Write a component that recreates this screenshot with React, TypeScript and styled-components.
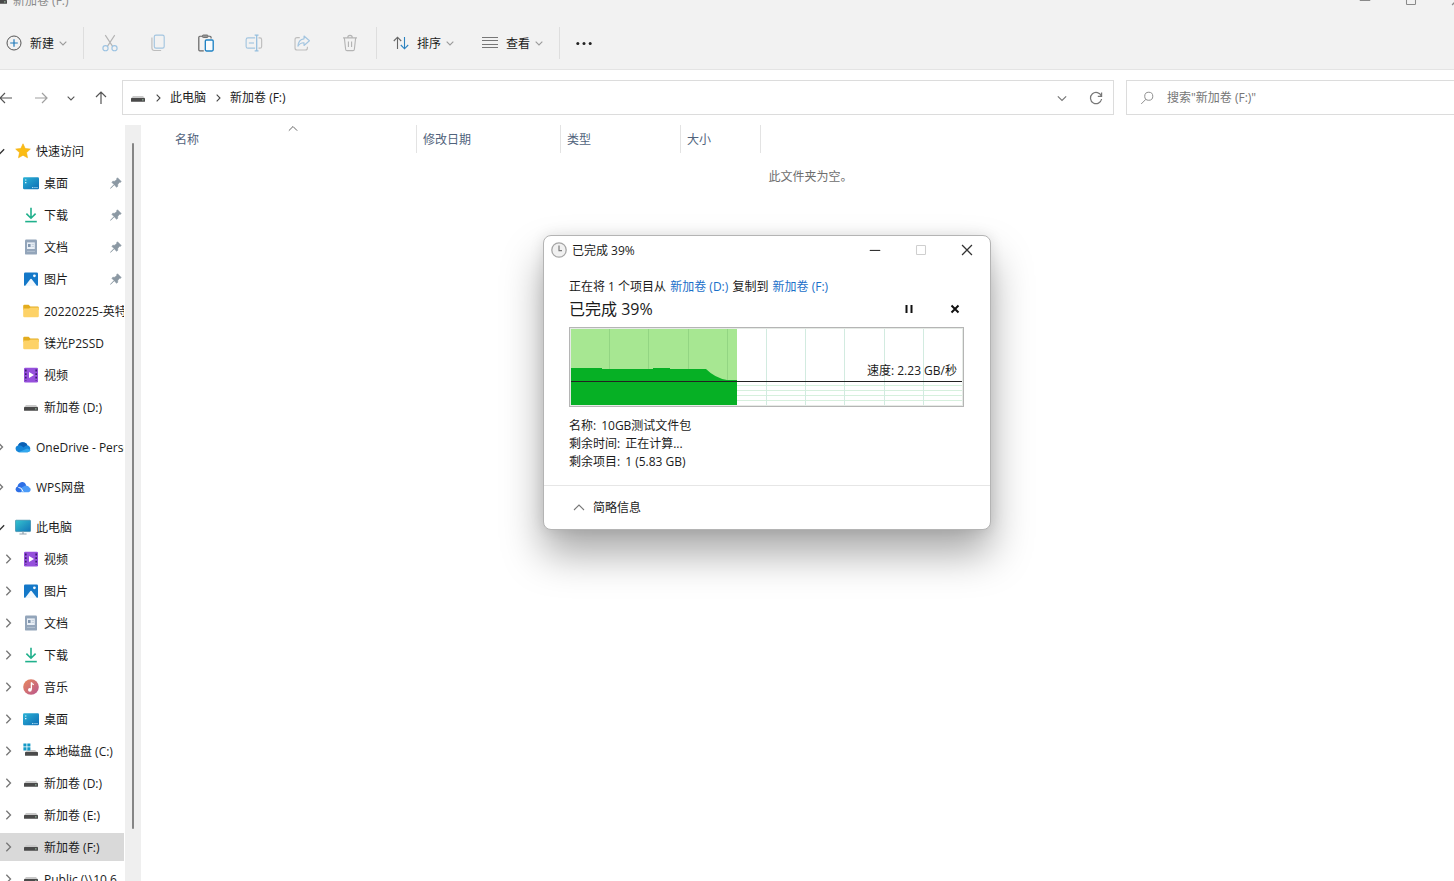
import React from "react";
import styled, { createGlobalStyle } from "styled-components";

const FONT = `"Open Sans", "Noto Sans CJK SC", sans-serif`;

const GlobalStyle = createGlobalStyle`
  *, *::before, *::after { box-sizing: border-box; }
  body {
    margin: 0;
    overflow: hidden;
    background: #fff;
    color: #1b1b1b;
    font: 12px/18px ${FONT};
  }
  button, input { font: inherit; color: inherit; }
  button { padding: 0; border: 0; background: none; cursor: pointer; }
  a { color: inherit; text-decoration: none; }
  svg { display: block; flex: none; }
`;

/* ---------- window shell ---------- */

const Viewport = styled.div`
  position: relative;
  display: flex;
  height: 100vh;
  overflow: hidden;
`;

const ExplorerWindow = styled.div`
  flex: 1;
  min-width: 0;
  display: flex;
  flex-direction: column;
  margin: -16px -26px 0 -8px;
`;

const TitleBar = styled.header`
  flex: none;
  display: flex;
  align-items: center;
  height: 32px;
  background: #f2f2f2;
  color: #8a8a8a;
`;

const WindowTitle = styled.span`
  flex: 1;
  margin-left: 5px;
  padding-top: 2px;
`;

const CaptionButton = styled.button<{ $height: number; $color?: string }>`
  display: flex;
  align-items: center;
  justify-content: center;
  width: 46px;
  height: ${(p) => p.$height}px;
  color: ${(p) => p.$color ?? "#333"};
`;

/* ---------- command bar ---------- */

const CommandBar = styled.div`
  flex: none;
  display: flex;
  align-items: center;
  height: 54px;
  padding-top: 1px;
  background: #f2f2f2;
  border-bottom: 1px solid #e4e4e4;
`;

const CommandButton = styled.button`
  display: flex;
  align-items: center;
  gap: 5px;
  height: 32px;
  padding: 0 14px;
`;

const CommandLabel = styled.span`
  margin-left: 3px;
  padding-top: 1px;
`;

const IconButton = styled.button`
  display: flex;
  align-items: center;
  justify-content: center;
  width: 48px;
  height: 32px;
`;

const Divider = styled.div`
  width: 1px;
  height: 32px;
  margin: 0 2px;
  background: #dedede;
`;

/* ---------- navigation row ---------- */

const NavigationRow = styled.div`
  flex: none;
  display: flex;
  align-items: center;
  gap: 7px;
  height: 55px;
  padding-right: 16px;
`;

const NavButton = styled.button<{ $narrow?: boolean }>`
  display: flex;
  align-items: center;
  justify-content: center;
  width: ${(p) => (p.$narrow ? 18 : 28)}px;
  height: 28px;
`;

const AddressBox = styled.nav`
  flex: 1;
  display: flex;
  align-items: center;
  height: 35px;
  margin-right: 5px;
  padding: 0 3px 0 7px;
  border: 1px solid #dcdcdc;
`;

const CrumbSeparator = styled.span`
  display: flex;
  justify-content: center;
  width: 24px;
`;

const AddressTools = styled.div`
  display: flex;
  gap: 6px;
  margin-left: auto;
`;

const SearchBox = styled.label`
  display: flex;
  align-items: center;
  gap: 13px;
  width: 338px;
  height: 35px;
  padding-left: 13px;
  border: 1px solid #dcdcdc;
`;

const SearchInput = styled.input`
  flex: 1;
  min-width: 0;
  height: 28px;
  padding: 0;
  border: 0;
  outline: 0;
  background: none;
  &::placeholder { color: #767676; opacity: 1; }
`;

/* ---------- body ---------- */

const Body = styled.div`
  flex: 1;
  min-height: 0;
  display: flex;
`;

const Sidebar = styled.nav`
  width: 132px;
  overflow: hidden;
  padding-top: 10px;
`;

const TreeGroup = styled.ul`
  margin: 0 0 12px;
  padding: 0;
  list-style: none;
`;

const TreeRow = styled.li<{ $level: number; $selected?: boolean }>`
  display: flex;
  align-items: center;
  height: 28px;
  margin: 2px 0;
  padding-left: ${(p) => p.$level * 8}px;
  background: ${(p) => (p.$selected ? "#d9d9d9" : "transparent")};
  & + & { margin-top: 4px; }
`;

const Expander = styled.button`
  flex: none;
  display: flex;
  align-items: center;
  justify-content: center;
  width: 16px;
  height: 28px;
`;

const ExpanderSpace = styled.span`
  flex: none;
  width: 16px;
`;

const TreeLink = styled.a`
  flex: 1;
  min-width: 0;
  display: flex;
  align-items: center;
  gap: 5px;
  margin-left: 7px;
`;

const TreeLabel = styled.span`
  flex: 1;
  min-width: 0;
  padding-top: 2px;
  overflow: hidden;
  white-space: nowrap;
`;

const PinSlot = styled.span`
  flex: none;
  margin-right: 2px;
`;

const ScrollTrack = styled.div`
  flex: none;
  display: flex;
  justify-content: center;
  width: 16px;
  margin-left: 1px;
  padding: 18px 0 52px;
  background: #efefef;
`;

const ScrollThumb = styled.div`
  width: 2px;
  border-radius: 1px;
  background: #858585;
`;

const FilePane = styled.main`
  flex: 1;
  min-width: 0;
`;

const FileTable = styled.table`
  margin-left: 28px;
  border-collapse: separate;
  border-spacing: 0;
  table-layout: fixed;
  width: 592px;
`;

const HeaderCell = styled.th<{ $width: number }>`
  position: relative;
  width: ${(p) => p.$width}px;
  height: 28px;
  padding: 2px 6px 0;
  border-right: 1px solid #e3e3e3;
  color: #51637c;
  font-weight: 400;
  text-align: left;
`;

const SortMark = styled.span`
  position: absolute;
  top: -1px;
  left: 50%;
  margin-left: -5px;
`;

const EmptyMessage = styled.p`
  margin: 15px 0 0;
  color: #6d6d6d;
  text-align: center;
`;

/* ---------- copy dialog ---------- */

const Dialog = styled.section`
  position: absolute;
  top: 235px;
  left: 543px;
  width: 448px;
  border: 1px solid #b4b4b4;
  border-radius: 8px;
  background: #fff;
  box-shadow: 0 24px 40px rgba(0, 0, 0, 0.34), 0 0 14px rgba(0, 0, 0, 0.1);
`;

const DialogTitleBar = styled.header`
  display: flex;
  align-items: center;
  gap: 5px;
  height: 28px;
  padding-left: 7px;
`;

const DialogTitle = styled.h1`
  flex: 1;
  margin: 0;
  padding-top: 2px;
  font-size: 12px;
  font-weight: 400;
`;

const CaptionButtons = styled.div`
  display: flex;
`;

const DialogBody = styled.div`
  padding: 14px 26px 14px 25px;
`;

const CopyLine = styled.p`
  margin: 0;
`;

const CopyLink = styled.a`
  margin: 0 1px;
  color: #1a6fc9;
`;

const ProgressRow = styled.div`
  display: flex;
  align-items: center;
  height: 25px;
`;

const ProgressText = styled.h2`
  flex: 1;
  margin: 0;
  font-size: 16px;
  font-weight: 400;
`;

const TransferButton = styled.button`
  display: flex;
  align-items: center;
  justify-content: center;
  width: 18px;
  height: 18px;
  margin-left: 28px;
`;

const Chart = styled.div`
  position: relative;
  margin-top: 6px;
`;

const SpeedLabel = styled.span`
  position: absolute;
  top: 35px;
  right: 7px;
`;

const Details = styled.dl`
  margin: 10px 0 0;
`;

const DetailRow = styled.div`
  display: flex;
  gap: 5px;
`;

const DetailTerm = styled.dt``;

const DetailValue = styled.dd`
  margin: 0;
`;

const DialogFooter = styled.footer`
  display: flex;
  align-items: center;
  height: 44px;
  padding-left: 29px;
  border-top: 1px solid #e6e6e6;
`;

const DetailsToggle = styled.button`
  display: flex;
  align-items: center;
  gap: 8px;
`;

/* ---------- icons ---------- */

type Direction = "up" | "down" | "right";

const chevronPaths: Record<Direction, string> = {
  up: "M1 8L6 3L11 8",
  down: "M1 4L6 9L11 4",
  right: "M4 1L9 6L4 11",
};

function Chevron({ to, size = 8, color = "#9a9a9a", weight = 1.6 }: { to: Direction; size?: number; color?: string; weight?: number }) {
  return (
    <svg width={size} height={size} viewBox="0 0 12 12" fill="none" stroke={color} strokeWidth={weight} aria-hidden>
      <path d={chevronPaths[to]} />
    </svg>
  );
}

function Glyph({ children, size = 16 }: { children: React.ReactNode; size?: number }) {
  return (
    <svg width={size} height={size} viewBox="0 0 16 16" fill="none" aria-hidden>
      {children}
    </svg>
  );
}

const NewIcon = () => (
  <Glyph>
    <circle cx="8" cy="8" r="7" stroke="#555" />
    <path d="M8 4.2V11.8M4.2 8H11.8" stroke="#1f78b8" strokeWidth="1.2" />
  </Glyph>
);

const CutIcon = () => (
  <Glyph size={18}>
    <path d="M3.8 1L10.3 11M12.2 1L5.7 11" stroke="#b4b4b4" />
    <circle cx="4" cy="12.6" r="2.3" stroke="#9cc3e2" />
    <circle cx="12" cy="12.6" r="2.3" stroke="#9cc3e2" />
  </Glyph>
);

const CopyIcon = () => (
  <Glyph size={18}>
    <rect x="4.7" y="1" width="8.8" height="11.6" rx="1.5" stroke="#a3c5e0" />
    <path d="M2.6 3.2V12.5Q2.6 14.7 4.8 14.7H10.8" stroke="#bdbdbd" />
  </Glyph>
);

const PasteIcon = () => (
  <Glyph size={18}>
    <path d="M5 2H2.5Q1.6 2 1.6 3V14Q1.6 15 2.5 15H6M10 2H11.6Q12.5 2 12.5 3V4" stroke="#666" strokeWidth="1.1" />
    <rect x="4.8" y="0.9" width="5" height="2.2" rx="0.8" fill="#999" stroke="#666" strokeWidth="0.8" />
    <rect x="7.4" y="5.3" width="7" height="9.8" rx="1" fill="#f8fbfd" stroke="#1f82c4" strokeWidth="1.2" />
  </Glyph>
);

const RenameIcon = () => (
  <Glyph size={18}>
    <path d="M9 3.4H2.6Q1 3.4 1 5V11Q1 12.6 2.6 12.6H9" stroke="#a3c5e0" />
    <path d="M12 3.4H13.2Q14.8 3.4 14.8 5V11Q14.8 12.6 13.2 12.6H12" stroke="#bdbdbd" />
    <path d="M8.6 1H12M8.6 15H12M10.4 1V15M3.4 8H8" stroke="#94bede" strokeWidth="1.1" />
  </Glyph>
);

const ShareIcon = () => (
  <Glyph size={18}>
    <path d="M6 3.2H3.6Q1.8 3.2 1.8 5V12.4Q1.8 14.2 3.6 14.2H11Q12.8 14.2 12.8 12.4V11.4" stroke="#bdbdbd" />
    <path d="M9.8 1.8L14.6 6L9.8 10.2V7.8Q6.4 7.6 4.4 10.8Q4.8 4.8 9.8 4.3Z" stroke="#a3c5e0" strokeLinejoin="round" />
  </Glyph>
);

const TrashIcon = () => (
  <Glyph size={18}>
    <path d="M1.8 3.4H14.2M6 3.2Q6 1.2 8 1.2T10 3.2M3 3.6L4.1 13.6Q4.2 14.8 5.4 14.8H10.6Q11.8 14.8 11.9 13.6L13 3.6M6.6 6.6V11.6M9.4 6.6V11.6" stroke="#b4b4b4" />
  </Glyph>
);

const SortIcon = () => (
  <Glyph>
    <path d="M4.5 14V2.2M0.8 6L4.5 2.2L8.2 6" stroke="#666" strokeWidth="1.1" />
    <path d="M11.5 2V13.8M7.8 10L11.5 13.8L15.2 10" stroke="#2b82c0" strokeWidth="1.1" />
  </Glyph>
);

const ViewIcon = () => (
  <Glyph>
    <path d="M0 2.5H16M0 5.5H16M0 9.5H16M0 12.5H16" stroke="#777" />
  </Glyph>
);

const MoreIcon = () => (
  <Glyph>
    <circle cx="1.8" cy="8.4" r="1.5" fill="#222" />
    <circle cx="8" cy="8.4" r="1.5" fill="#222" />
    <circle cx="14.2" cy="8.4" r="1.5" fill="#222" />
  </Glyph>
);

const ArrowIcon = ({ angle, color }: { angle: number; color: string }) => (
  <Glyph>
    <path d="M14 8H2.4M7 3L2 8L7 13" stroke={color} strokeWidth="1.2" transform={`rotate(${angle} 8 8)`} />
  </Glyph>
);

const RefreshIcon = () => (
  <Glyph>
    <path d="M13.3 6A5.6 5.6 0 1 0 13.6 9" stroke="#777" strokeWidth="1.2" />
    <path d="M13.6 2.4V6.3H9.8" stroke="#777" strokeWidth="1.2" />
  </Glyph>
);

const SearchIcon = () => (
  <Glyph size={14}>
    <circle cx="10" cy="6" r="4.6" stroke="#8a8a8a" strokeWidth="1.1" />
    <path d="M6.8 9.4L1.4 14.8" stroke="#8a8a8a" strokeWidth="1.1" />
  </Glyph>
);

const DriveIcon = () => (
  <Glyph>
    <path d="M3 6H13L15 8.2H1Z" fill="#c9c9c9" />
    <rect x="1" y="8" width="14" height="3.8" rx="0.6" fill="#4a4a4a" />
    <rect x="12" y="9.4" width="1.6" height="1" fill="#9fc2a8" />
  </Glyph>
);

const SystemDriveIcon = () => (
  <Glyph>
    <path d="M4 7H12L15 9.6H2Z" fill="#c9c9c9" />
    <rect x="2" y="9" width="13" height="3.8" rx="0.6" fill="#4a4a4a" />
    <path d="M0.4 0.4H3.5V3.5H0.4ZM4.3 0.4H7.4V3.5H4.3ZM0.4 4.3H3.5V7.4H0.4ZM4.3 4.3H7.4V7.4H4.3Z" fill="#1499c6" />
  </Glyph>
);

const StarIcon = () => (
  <Glyph>
    <path d="M8 0.8L10.2 5.5L15.3 6.1L11.5 9.6L12.5 14.8L8 12.2L3.5 14.8L4.5 9.6L0.7 6.1L5.8 5.5Z" fill="#fbbc14" stroke="#f2ae0c" strokeWidth="0.6" strokeLinejoin="round" />
  </Glyph>
);

const DesktopIcon = () => (
  <Glyph>
    <defs>
      <linearGradient id="desktop" x1="0" y1="0" x2="1" y2="1">
        <stop offset="0" stopColor="#2bb3d6" />
        <stop offset="1" stopColor="#0f6db5" />
      </linearGradient>
    </defs>
    <rect x="0" y="2.2" width="16" height="12" rx="1.2" fill="url(#desktop)" />
    <path d="M2 4.4H3.4V5.6H2ZM2 7H3.4V8.2H2Z" fill="#d8f4fb" />
    <path d="M9 12.6H10.4M11.4 12.6H12.6M13.4 12.6H14.6" stroke="#bfe6f5" />
  </Glyph>
);

const DownloadIcon = () => (
  <Glyph>
    <path d="M8 0.8V11M3.4 6.6L8 11.2L12.6 6.6" stroke="#20b08c" strokeWidth="1.6" />
    <path d="M2.2 14.6H13.8" stroke="#20b08c" strokeWidth="1.6" />
  </Glyph>
);

const DocumentIcon = () => (
  <Glyph>
    <rect x="2" y="0.6" width="12" height="15" rx="1.2" fill="#93a5ba" />
    <rect x="4" y="3.4" width="7.8" height="6.6" fill="#e9eff6" />
    <path d="M5 5H7.6V8H5Z" fill="#8296ae" />
    <path d="M8.6 5.4H11M8.6 7.4H11M4 12.4H12" stroke="#b9c6d4" strokeWidth="0.8" />
  </Glyph>
);

const PictureIcon = () => (
  <Glyph>
    <rect x="1" y="1.4" width="14" height="13.6" rx="1.2" fill="#1478c8" />
    <path d="M2 15L7.4 8Q8 7.4 8.6 8L14 15Z" fill="#f1f8fd" />
    <circle cx="11.4" cy="4.8" r="1.4" fill="#f1f8fd" />
  </Glyph>
);

const FolderIcon = () => (
  <Glyph>
    <path d="M0.2 3Q0.2 1.8 1.4 1.8H5.6L7.4 3.6H14.6Q15.8 3.6 15.8 4.8V7H0.2Z" fill="#e3ac1e" />
    <path d="M0.2 5.6H6L7.6 4.4H14.6Q15.8 4.4 15.8 5.6V13Q15.8 14.2 14.6 14.2H1.4Q0.2 14.2 0.2 13Z" fill="#fdd267" />
  </Glyph>
);

const VideoIcon = () => (
  <Glyph>
    <rect x="1" y="0.8" width="14" height="14.6" rx="1.2" fill="#9650dc" />
    <path d="M2.8 2.6V14M13.2 2.6V14" stroke="#3d1c6e" strokeWidth="1.6" strokeDasharray="1.8 1.8" />
    <path d="M6 5L11 8L6 11Z" fill="#fff" />
  </Glyph>
);

const MusicIcon = () => (
  <Glyph>
    <defs>
      <linearGradient id="music" x1="0" y1="0" x2="1" y2="1">
        <stop offset="0" stopColor="#e98a5c" />
        <stop offset="1" stopColor="#b9558e" />
      </linearGradient>
    </defs>
    <circle cx="8" cy="8" r="7.8" fill="url(#music)" />
    <path d="M8.4 3.2V10.6M8.4 3.4Q9 5.2 10.8 5.6" stroke="#fff" strokeWidth="1.3" />
    <circle cx="6.9" cy="10.8" r="1.9" fill="#fff" />
  </Glyph>
);

const OneDriveIcon = () => (
  <Glyph>
    <path d="M3.6 13.2A3.5 3.5 0 0 1 3 6.4A5.2 5.2 0 0 1 12.4 6.2A3.6 3.6 0 0 1 12.6 13.2Z" fill="#1585d8" />
    <path d="M3 6.4A5.2 5.2 0 0 1 12.4 6.2Q9.8 6.4 8.6 8.6Q6 6 3 6.4Z" fill="#0a5fb4" />
    <path d="M3.6 13.2L12.2 9.4Q15 10.4 15.6 11.2Q14.8 13.2 12.6 13.2Z" fill="#32a8ee" />
  </Glyph>
);

const WpsIcon = () => (
  <Glyph>
    <path d="M3 13.2A3 3 0 0 1 2.6 7.4A4.6 4.6 0 0 1 9.6 3.8Q10.8 4.8 11.2 6.4L6 13.2Z" fill="#2d6fe6" />
    <path d="M6.6 13.2A3.4 3.4 0 0 1 8.6 7.6A3.8 3.8 0 0 1 14.4 8.4A2.6 2.6 0 0 1 13.6 13.2Z" fill="#4c9bf8" />
    <path d="M3.4 8.4Q6.6 8 8.2 12.8" stroke="#fff" strokeWidth="1" />
  </Glyph>
);

const ComputerIcon = () => (
  <Glyph>
    <defs>
      <linearGradient id="computer" x1="0" y1="0" x2="1" y2="1">
        <stop offset="0" stopColor="#35c5cf" />
        <stop offset="1" stopColor="#1273b8" />
      </linearGradient>
    </defs>
    <rect x="0.4" y="1.2" width="15.2" height="11.4" rx="0.8" fill="url(#computer)" stroke="#2b7c9c" strokeWidth="0.6" />
    <path d="M8 12.6V14.8M4.4 15H11.6" stroke="#8fa0ac" strokeWidth="1.2" />
  </Glyph>
);

const PinIcon = () => (
  <Glyph size={12}>
    <path d="M10 1L15 6L13.6 7.2L12.8 7L10.4 9.6L10.2 12.6L8.8 13.6L5.6 10.4L1.4 14.8L0.8 15.2L1.2 14.4L5.4 10L2.6 7.2L3.6 5.8L6.4 5.6L9 3.2L8.8 2.4Z" fill="#8b98a3" stroke="#8b98a3" strokeWidth="0.8" />
  </Glyph>
);

const ClockIcon = () => (
  <Glyph>
    <circle cx="8" cy="8" r="7.2" fill="#f1f1f1" stroke="#a6a6a6" strokeWidth="1.3" />
    <path d="M8 3.6V8.6H11" stroke="#7c7c7c" strokeWidth="1.2" />
  </Glyph>
);

const MinimizeIcon = () => (
  <Glyph size={12}>
    <path d="M1 8.6H15" stroke="currentColor" strokeWidth="1.5" />
  </Glyph>
);

const MaximizeIcon = () => (
  <Glyph size={12}>
    <rect x="2" y="2" width="12" height="12" rx="1" stroke="currentColor" strokeWidth="1.4" />
  </Glyph>
);

const CloseIcon = () => (
  <Glyph size={12}>
    <path d="M1.4 1.4L14.6 14.6M14.6 1.4L1.4 14.6" stroke="currentColor" strokeWidth="1.7" />
  </Glyph>
);

/* ---------- sidebar data ---------- */

interface TreeItem {
  label: string;
  icon: React.ComponentType;
  level: 0 | 1;
  state?: "open" | "closed";
  pinned?: boolean;
  selected?: boolean;
}

const treeGroups: TreeItem[][] = [
  [
    { label: "快速访问", icon: StarIcon, level: 0, state: "open" },
    { label: "桌面", icon: DesktopIcon, level: 1, pinned: true },
    { label: "下载", icon: DownloadIcon, level: 1, pinned: true },
    { label: "文档", icon: DocumentIcon, level: 1, pinned: true },
    { label: "图片", icon: PictureIcon, level: 1, pinned: true },
    { label: "20220225-英特尔", icon: FolderIcon, level: 1 },
    { label: "镁光P2SSD", icon: FolderIcon, level: 1 },
    { label: "视频", icon: VideoIcon, level: 1 },
    { label: "新加卷 (D:)", icon: DriveIcon, level: 1 },
  ],
  [{ label: "OneDrive - Personal", icon: OneDriveIcon, level: 0, state: "closed" }],
  [{ label: "WPS网盘", icon: WpsIcon, level: 0, state: "closed" }],
  [
    { label: "此电脑", icon: ComputerIcon, level: 0, state: "open" },
    { label: "视频", icon: VideoIcon, level: 1, state: "closed" },
    { label: "图片", icon: PictureIcon, level: 1, state: "closed" },
    { label: "文档", icon: DocumentIcon, level: 1, state: "closed" },
    { label: "下载", icon: DownloadIcon, level: 1, state: "closed" },
    { label: "音乐", icon: MusicIcon, level: 1, state: "closed" },
    { label: "桌面", icon: DesktopIcon, level: 1, state: "closed" },
    { label: "本地磁盘 (C:)", icon: SystemDriveIcon, level: 1, state: "closed" },
    { label: "新加卷 (D:)", icon: DriveIcon, level: 1, state: "closed" },
    { label: "新加卷 (E:)", icon: DriveIcon, level: 1, state: "closed" },
    { label: "新加卷 (F:)", icon: DriveIcon, level: 1, state: "closed", selected: true },
    { label: "Public (\\\\10.6", icon: DriveIcon, level: 1, state: "closed" },
  ],
];

function TreeEntry({ item }: { item: TreeItem }) {
  const Icon = item.icon;
  return (
    <TreeRow $level={item.level} $selected={item.selected}>
      {item.state ? (
        <Expander aria-label={`${item.label} ${item.state === "open" ? "折叠" : "展开"}`}>
          <Chevron
            to={item.state === "open" ? "down" : "right"}
            size={10}
            color={item.state === "open" ? "#333" : "#777"}
          />
        </Expander>
      ) : (
        <ExpanderSpace />
      )}
      <TreeLink href="#">
        <Icon />
        <TreeLabel>{item.label}</TreeLabel>
        {item.pinned && (
          <PinSlot>
            <PinIcon />
          </PinSlot>
        )}
      </TreeLink>
    </TreeRow>
  );
}

/* ---------- transfer speed chart ---------- */

const columns = [40, 79, 119, 158, 197, 236, 275, 315, 354];
const rows = [58, 63, 68, 73];

function SpeedChart() {
  return (
    <Chart>
      <svg width="100%" height="80" viewBox="0 0 395 80" preserveAspectRatio="none" role="img" aria-label="传输速度">
        <rect x="0.5" y="0.5" width="394" height="79" fill="#fff" stroke="#b5b5b5" />
        <rect x="1.5" y="1.5" width="392" height="77" fill="none" stroke="#e6ebe6" />
        {rows.map((y) => (
          <path key={y} d={`M2 ${y + 0.5}H393`} stroke="#d6f0dd" />
        ))}
        {columns.map((x) => (
          <path key={x} d={`M${x + 0.5} 2V78`} stroke="#d2ebe0" />
        ))}
        <rect x="2" y="2" width="166" height="76" fill="#a7e792" />
        {columns.slice(0, 4).map((x) => (
          <path key={x} d={`M${x + 0.5} 2V54`} stroke="#93d583" />
        ))}
        <path d="M2 41H33V42H84V41H101V42H137Q146 51 158 53H168V78H2Z" fill="#06b025" />
        <path d="M2 54.5H393" stroke="#222" />
      </svg>
      <SpeedLabel>速度: 2.23 GB/秒</SpeedLabel>
    </Chart>
  );
}

const details = [
  ["名称:", "10GB测试文件包"],
  ["剩余时间:", "正在计算..."],
  ["剩余项目:", "1 (5.83 GB)"],
];

function CopyDialog() {
  return (
    <Dialog role="dialog" aria-labelledby="copy-title">
      <DialogTitleBar>
        <ClockIcon />
        <DialogTitle id="copy-title">已完成 39%</DialogTitle>
        <CaptionButtons>
          <CaptionButton $height={28} aria-label="最小化"><MinimizeIcon /></CaptionButton>
          <CaptionButton $height={28} $color="#cfcfcf" aria-label="最大化" disabled><MaximizeIcon /></CaptionButton>
          <CaptionButton $height={28} aria-label="关闭"><CloseIcon /></CaptionButton>
        </CaptionButtons>
      </DialogTitleBar>
      <DialogBody>
        <CopyLine>
          正在将 1 个项目从 <CopyLink href="#">新加卷 (D:)</CopyLink> 复制到 <CopyLink href="#">新加卷 (F:)</CopyLink>
        </CopyLine>
        <ProgressRow>
          <ProgressText>已完成 39%</ProgressText>
          <TransferButton aria-label="暂停">
            <Glyph>
              <path d="M5.5 4V12M10.5 4V12" stroke="#111" strokeWidth="2" />
            </Glyph>
          </TransferButton>
          <TransferButton aria-label="取消">
            <Glyph>
              <path d="M4.5 4.5L11.5 11.5M11.5 4.5L4.5 11.5" stroke="#111" strokeWidth="2" />
            </Glyph>
          </TransferButton>
        </ProgressRow>
        <SpeedChart />
        <Details>
          {details.map(([term, value]) => (
            <DetailRow key={term}>
              <DetailTerm>{term}</DetailTerm>
              <DetailValue>{value}</DetailValue>
            </DetailRow>
          ))}
        </Details>
      </DialogBody>
      <DialogFooter>
        <DetailsToggle>
          <Chevron to="up" size={12} color="#777" weight={1.1} />
          简略信息
        </DetailsToggle>
      </DialogFooter>
    </Dialog>
  );
}

const editActions: [string, React.ComponentType][] = [
  ["剪切", CutIcon],
  ["复制", CopyIcon],
  ["粘贴", PasteIcon],
  ["重命名", RenameIcon],
  ["共享", ShareIcon],
  ["删除", TrashIcon],
];

function CommandMenu({ icon: Icon, label }: { icon: React.ComponentType; label: string }) {
  return (
    <CommandButton>
      <Icon />
      <CommandLabel>{label}</CommandLabel>
      <Chevron to="down" />
    </CommandButton>
  );
}

export default function App() {
  return (
    <Viewport>
      <GlobalStyle />
      <ExplorerWindow>
        <TitleBar>
          <DriveIcon />
          <WindowTitle>新加卷 (F:)</WindowTitle>
          <CaptionButton $height={32} $color="#8a8a8a" aria-label="最小化"><MinimizeIcon /></CaptionButton>
          <CaptionButton $height={32} $color="#8a8a8a" aria-label="最大化"><MaximizeIcon /></CaptionButton>
          <CaptionButton $height={32} $color="#8a8a8a" aria-label="关闭"><CloseIcon /></CaptionButton>
        </TitleBar>

        <CommandBar role="toolbar">
          <CommandMenu icon={NewIcon} label="新建" />
          <Divider />
          {editActions.map(([label, Icon]) => (
            <IconButton key={label} aria-label={label}>
              <Icon />
            </IconButton>
          ))}
          <Divider />
          <CommandMenu icon={SortIcon} label="排序" />
          <CommandMenu icon={ViewIcon} label="查看" />
          <Divider />
          <CommandButton aria-label="更多"><MoreIcon /></CommandButton>
        </CommandBar>

        <NavigationRow>
          <NavButton aria-label="后退"><ArrowIcon angle={0} color="#555" /></NavButton>
          <NavButton aria-label="前进"><ArrowIcon angle={180} color="#a0a0a0" /></NavButton>
          <NavButton $narrow aria-label="最近位置"><Chevron to="down" color="#555" /></NavButton>
          <NavButton aria-label="向上"><ArrowIcon angle={90} color="#555" /></NavButton>
          <AddressBox aria-label="地址">
            <DriveIcon />
            <CrumbSeparator><Chevron to="right" color="#444" /></CrumbSeparator>
            <a href="#">此电脑</a>
            <CrumbSeparator><Chevron to="right" color="#444" /></CrumbSeparator>
            <a href="#">新加卷 (F:)</a>
            <AddressTools>
              <NavButton aria-label="历史记录"><Chevron to="down" size={10} color="#777" weight={1.4} /></NavButton>
              <NavButton aria-label="刷新"><RefreshIcon /></NavButton>
            </AddressTools>
          </AddressBox>
          <SearchBox>
            <SearchIcon />
            <SearchInput type="text" aria-label="搜索" placeholder={'搜索"新加卷 (F:)"'} />
          </SearchBox>
        </NavigationRow>

        <Body>
          <Sidebar aria-label="导航窗格">
            {treeGroups.map((group, index) => (
              <TreeGroup key={index}>
                {group.map((item) => (
                  <TreeEntry key={item.label} item={item} />
                ))}
              </TreeGroup>
            ))}
          </Sidebar>
          <ScrollTrack>
            <ScrollThumb />
          </ScrollTrack>
          <FilePane>
            <FileTable>
              <thead>
                <tr>
                  <HeaderCell $width={248} scope="col">
                    名称
                    <SortMark><Chevron to="up" size={10} color="#666" weight={1.2} /></SortMark>
                  </HeaderCell>
                  <HeaderCell $width={144} scope="col">修改日期</HeaderCell>
                  <HeaderCell $width={120} scope="col">类型</HeaderCell>
                  <HeaderCell $width={80} scope="col">大小</HeaderCell>
                </tr>
              </thead>
            </FileTable>
            <EmptyMessage>此文件夹为空。</EmptyMessage>
          </FilePane>
        </Body>
      </ExplorerWindow>
      <CopyDialog />
    </Viewport>
  );
}
